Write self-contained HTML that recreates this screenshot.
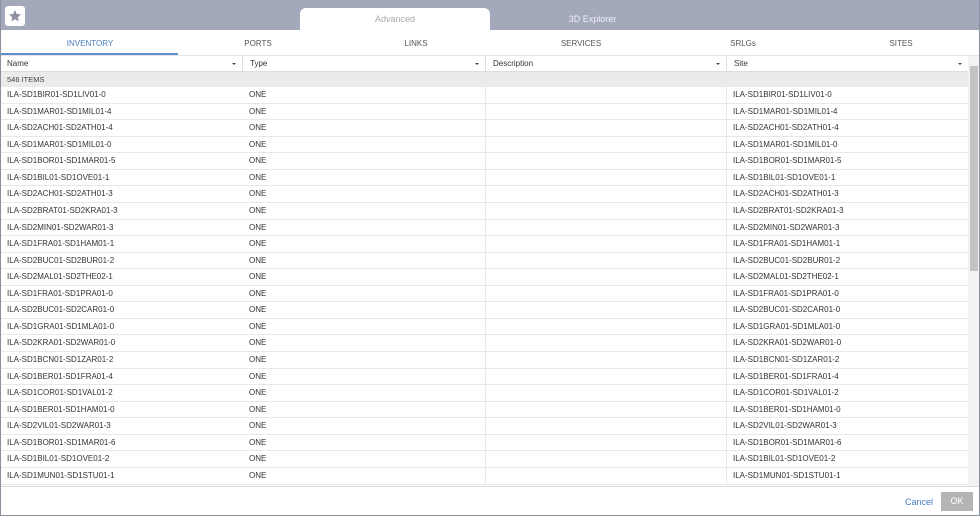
<!DOCTYPE html>
<html><head><style>
*{box-sizing:border-box;margin:0;padding:0}
body{width:980px;height:516px;overflow:hidden;background:#fff;font-family:"Liberation Sans",sans-serif;font-size:8px;color:#333;position:relative}
.frame{position:absolute;left:0;top:0;width:980px;height:516px;border:1px solid #8a8f9c;border-top:none;pointer-events:none}
.top{position:absolute;left:0;top:0;width:980px;height:30px;background:#a3a9bb}
.star{position:absolute;left:5px;top:6px;width:20px;height:20px;background:#fff;border-radius:3px}
.tab{position:absolute;top:8px;height:22px;line-height:22px;text-align:center;font-size:9px}
.sub{position:absolute;top:30px;height:26px;width:980px;border-bottom:1px solid #e4e4e4}
.sub span{position:absolute;top:9px;font-size:8px;color:#555;transform:translateX(-50%)}
.ul{position:absolute;left:0;top:53px;width:178px;height:2px;background:#5b8fd0}
.hdr{position:absolute;top:56px;left:0;width:968px;height:16px;border-bottom:1px solid #ddd}
.hdr div{position:absolute;top:0;height:16px;line-height:16px;padding-left:7px;font-size:8px;color:#333;border-right:1px solid #ddd}
.hdr div:after{content:"";position:absolute;right:6px;top:7px;border:2.5px solid transparent;border-top:2.5px solid #444}
.grp{position:absolute;top:72px;left:0;width:968px;height:15px;background:#ebebeb;line-height:15px;padding-left:7px;font-size:7.5px;color:#444}
.rows{position:absolute;top:87px;left:0;width:968px}
.r{height:16.57px;border-bottom:1px solid #e8e8e8;position:relative;line-height:16px;font-size:8px}
.r span{position:absolute;top:0}
.r .d{position:absolute;left:485px;top:0;width:242px;height:100%;border-left:1px solid #e8e8e8;border-right:1px solid #e8e8e8}
.sb{position:absolute;left:968px;top:56px;width:12px;height:430px;background:#f2f2f2}
.th{position:absolute;left:970px;top:66px;width:8px;height:205px;background:#c4c4c4}
.foot{position:absolute;top:486px;left:0;width:980px;height:30px;border-top:1px solid #ddd}
.ok{position:absolute;left:941px;top:492px;width:32px;height:19px;background:#b5b5b5;color:#fff;text-align:center;line-height:19px;font-size:9px}
.cancel{position:absolute;left:905px;top:497px;color:#4a7cc0;font-size:9px}
</style></head><body>
<div class="top"></div>
<div class="star"><svg width="20" height="20" viewBox="0 0 20 20"><path d="M10 4l1.8 4 4.2.4-3.2 2.8 1 4.2L10 13.2 6.2 15.4l1-4.2L4 8.4l4.2-.4z" fill="#8d92a2"/></svg></div>
<div class="tab" style="left:300px;width:190px;background:#fff;border-radius:6px 6px 0 0;color:#aaa">Advanced</div>
<div class="tab" style="left:520px;width:145px;color:#eef">3D Explorer</div>
<div class="sub">
<span style="left:90px;color:#4a7cc0">INVENTORY</span><span style="left:258px">PORTS</span><span style="left:416px">LINKS</span><span style="left:581px">SERVICES</span><span style="left:743px">SRLGs</span><span style="left:901px">SITES</span>
</div>
<div class="ul"></div>
<div class="hdr"><div style="left:0;width:243px">Name</div><div style="left:243px;width:243px">Type</div><div style="left:486px;width:241px">Description</div><div style="left:727px;width:241px;border-right:none">Site</div></div>
<div class="grp">546 ITEMS</div>
<div class="rows" id="rows"></div>
<div class="sb"></div><div class="th"></div>
<div class="foot"></div>
<div class="cancel">Cancel</div><div class="ok">OK</div>
<div class="frame"></div>
<script>
var n=["ILA-SD1BIR01-SD1LIV01-0","ILA-SD1MAR01-SD1MIL01-4","ILA-SD2ACH01-SD2ATH01-4","ILA-SD1MAR01-SD1MIL01-0","ILA-SD1BOR01-SD1MAR01-5","ILA-SD1BIL01-SD1OVE01-1","ILA-SD2ACH01-SD2ATH01-3","ILA-SD2BRAT01-SD2KRA01-3","ILA-SD2MIN01-SD2WAR01-3","ILA-SD1FRA01-SD1HAM01-1","ILA-SD2BUC01-SD2BUR01-2","ILA-SD2MAL01-SD2THE02-1","ILA-SD1FRA01-SD1PRA01-0","ILA-SD2BUC01-SD2CAR01-0","ILA-SD1GRA01-SD1MLA01-0","ILA-SD2KRA01-SD2WAR01-0","ILA-SD1BCN01-SD1ZAR01-2","ILA-SD1BER01-SD1FRA01-4","ILA-SD1COR01-SD1VAL01-2","ILA-SD1BER01-SD1HAM01-0","ILA-SD2VIL01-SD2WAR01-3","ILA-SD1BOR01-SD1MAR01-6","ILA-SD1BIL01-SD1OVE01-2","ILA-SD1MUN01-SD1STU01-1"];
var h="";n.forEach(function(x){h+='<div class="r"><span style="left:7px">'+x+'</span><span style="left:249px">ONE</span><div class="d"></div><span style="left:733px">'+x+'</span></div>'});
document.getElementById("rows").innerHTML=h;
</script>
</body></html>
